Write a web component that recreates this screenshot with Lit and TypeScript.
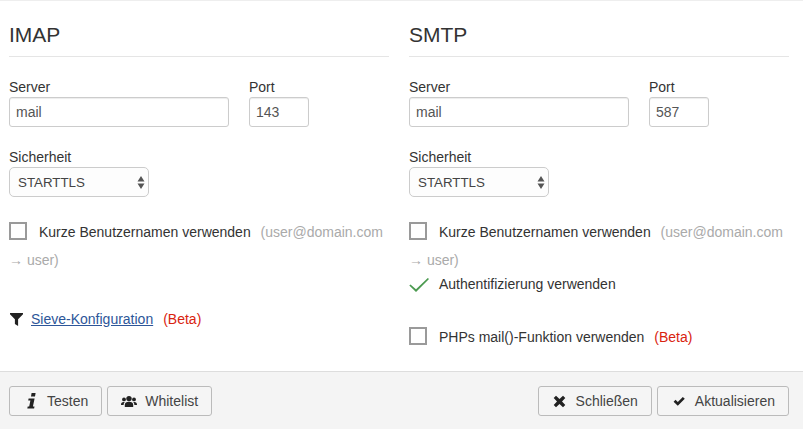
import { LitElement, html, css, svg } from 'lit';
import { customElement } from 'lit/decorators.js';

const icons = {
    filter: svg`<path d="M0 0h13v1.3L8.1 6.2v6.8l-3.2-2V6.2L0 1.3z"/>`,
    info: svg`<path d="M4.6 0h4l-.6 3.4h-4z M1.6 5.5h6l-1.7 8h1.6l-.4 2H.3l.4-2h1.5l1.2-6H1.2z"/>`,
    users: svg`<circle cx="8" cy="3.6" r="2.7"/><circle cx="3" cy="4.4" r="1.9"/><circle cx="13" cy="4.4" r="1.9"/><path d="M3.8 12v-2.2c0-2 1.6-3 4.2-3s4.2 1 4.2 3v2.2z M0 9.7c0-1.8 .9-2.8 2.6-2.8h1.2c-.8.7-1.2 1.7-1.2 3h-2.6z M16 9.7c0-1.8-.9-2.8-2.6-2.8h-1.2c.8.7 1.2 1.7 1.2 3h2.6z"/>`,
    close: svg`<path d="M3 .8l3.5 3.3 3.5-3.3 2.3 2.3-3.3 3.4 3.3 3.4-2.3 2.3-3.5-3.3-3.5 3.3-2.3-2.3 3.3-3.4-3.3-3.4z"/>`,
    check: svg`<path d="M.6 6.8l2.3-2.3 2.6 2.6 5.9-5.9 2.3 2.3-8.2 8.2z"/>`,
};

@customElement('app-root')
export class AppRoot extends LitElement {
    static override styles = css`
        :host {
            display: flex;
            flex-direction: column;
            height: 429px;
            width: 803px;
            overflow: hidden;
            font-family: 'Liberation Sans', Arial, sans-serif;
            font-size: 14px;
            color: #333;
            background: #fff;
            box-sizing: border-box;
            border-top: 1px solid #eee;
        }

        * {
            box-sizing: border-box;
        }

        .body {
            flex: 1;
            display: grid;
            grid-template-columns: 380px 380px;
            column-gap: 20px;
            padding: 0 14px 0 9px;
        }

        h4 {
            margin: 0;
            padding: 21px 0 8px;
            height: 56px;
            font-size: 21px;
            line-height: 26px;
            font-weight: 400;
            border-bottom: 1px solid #e5e5e5;
        }

        .row {
            display: flex;
            gap: 20px;
            margin-top: 21px;
        }

        label.cap {
            display: block;
            height: 19px;
            line-height: 19px;
        }

        .field {
            display: block;
            height: 30px;
            padding: 0 6px;
            border: 1px solid #ccc;
            border-radius: 3px;
            line-height: 28px;
            color: #555;
            box-shadow: inset 0 1px 1px rgba(0, 0, 0, 0.075);
        }

        .wide { width: 220px; }
        .port { width: 60px; }

        .sec {
            margin-top: 21px;
        }

        .select {
            display: flex;
            align-items: center;
            justify-content: space-between;
            width: 140px;
            height: 30px;
            padding: 0 3px 0 8px;
            border: 1px solid #ccc;
            border-radius: 5px;
            font-size: 13.33px;
            color: #444;
            background: #fdfdfd;
        }

        .arrows {
            display: block;
            width: 8px;
            height: 13px;
            fill: #555;
        }

        .check-row {
            margin-top: 21px;
            line-height: 28px;
        }

        .box {
            display: inline-block;
            width: 18px;
            height: 18px;
            border: 2px solid #9a9a9a;
            vertical-align: -3px;
            margin-right: 12px;
        }

        .hint {
            color: #aaa;
        }

        .hint.first {
            margin-left: 6px;
        }

        .beta {
            color: #d9230f;
            margin-left: 6px;
        }

        .auth {
            display: flex;
            align-items: center;
            height: 22px;
            margin-top: -1px;
        }

        .tick {
            width: 20px;
            height: 14px;
            margin: 1px 10px 0 0;
            fill: #4b9a50;
        }

        .php {
            margin-top: 28px;
            line-height: 28px;
        }

        .sieve {
            display: flex;
            align-items: center;
            margin-top: 35px;
            height: 20px;
        }

        .sieve svg {
            width: 13px;
            height: 13px;
            margin: 0 8px 0 1px;
            fill: #222;
        }

        .sieve a {
            color: #2d5699;
            text-decoration: underline;
        }

        .sieve .beta {
            margin-left: 10px;
        }

        .footer {
            display: flex;
            justify-content: space-between;
            height: 58px;
            padding: 14px 14px 0 9px;
            background: #f4f4f4;
            border-top: 1px solid #ddd;
        }

        .group {
            display: flex;
            gap: 5px;
        }

        .btn {
            display: flex;
            align-items: center;
            height: 30px;
            padding: 0 13px;
            border: 1px solid #bbb;
            border-radius: 3px;
            background: #f5f5f5;
            color: #444;
        }

        .btn svg {
            fill: #222;
            margin-right: 10px;
            flex: none;
        }

        .btn svg.tight {
            margin-right: 8px;
        }
    `;

    private _btn(icon: keyof typeof icons, label: string, w: number, h: number, vb: string, tight = false) {
        return html`
            <div class="btn">
                <svg class=${tight ? 'tight' : ''} width=${w} height=${h} viewBox=${vb} aria-hidden="true">${icons[icon]}</svg>
                ${label}
            </div>
        `;
    }

    private _fields(port: string) {
        return html`
            <div class="row">
                <div>
                    <label class="cap">Server</label>
                    <span class="field wide">mail</span>
                </div>
                <div>
                    <label class="cap">Port</label>
                    <span class="field port">${port}</span>
                </div>
            </div>
            <div class="sec">
                <label class="cap">Sicherheit</label>
                <div class="select">
                    STARTTLS
                    <svg class="arrows" viewBox="0 0 8 13" aria-hidden="true"><path d="M4 0l3.5 5.5h-7z M4 13l3.5-5.5h-7z"/></svg>
                </div>
            </div>
            <div class="check-row">
                <span class="box"></span>Kurze Benutzernamen verwenden <span class="hint first">(user@domain.com</span> <span class="hint">→ user)</span>
            </div>
        `;
    }

    override render() {
        return html`
            <div class="body">
                <section>
                    <h4>IMAP</h4>
                    ${this._fields('143')}
                    <div class="sieve">
                        <svg viewBox="0 0 13 13" aria-hidden="true">${icons.filter}</svg>
                        <a href="#">Sieve-Konfiguration</a>
                        <span class="beta">(Beta)</span>
                    </div>
                </section>
                <section>
                    <h4>SMTP</h4>
                    ${this._fields('587')}
                    <div class="auth">
                        <svg class="tick" viewBox="0 0 20 14" aria-hidden="true"><path d="M.3 7.6l1.2-1 5.5 4.7L18.8 0 20 1 7 14z"/></svg>
                        Authentifizierung verwenden
                    </div>
                    <div class="php">
                        <span class="box"></span>PHPs mail()-Funktion verwenden <span class="beta">(Beta)</span>
                    </div>
                </section>
            </div>
            <div class="footer">
                <div class="group">
                    ${this._btn('info', 'Testen', 14, 16, '-4 0 14 16')}
                    ${this._btn('users', 'Whitelist', 16, 12, '0 0 16 12', true)}
                </div>
                <div class="group">
                    ${this._btn('close', 'Schließen', 14, 13, '-1 0 14 13')}
                    ${this._btn('check', 'Aktualisieren', 14, 13, '-2.4 -1 16.3 15.2')}
                </div>
            </div>
        `;
    }
}

declare global {
    interface HTMLElementTagNameMap {
        'app-root': AppRoot;
    }
}
